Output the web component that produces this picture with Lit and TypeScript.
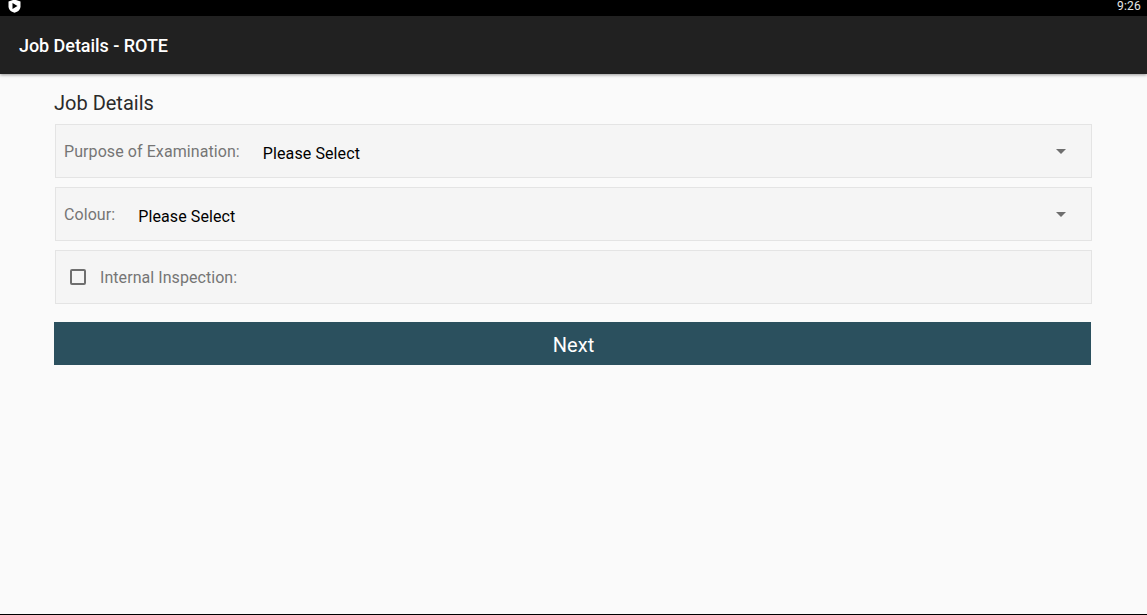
import { LitElement, html, css } from "lit";
import { customElement } from "lit/decorators.js";

@customElement("app-root")
export class AppRoot extends LitElement {
  static styles = css`
    :host { display: flex; flex-direction: column; width: 1147px; height: 615px; overflow: hidden; background: #fafafa; font-family: Roboto, sans-serif; }
    .status { height: 16px; flex: none; background: #000; display: flex; align-items: center; justify-content: space-between; padding: 0 6px 0 8px; color: #e6e6e6; font-size: 12px; }
    .status svg { display: block; margin-top: -4px; }
    .status span { margin-top: -4px; letter-spacing: .2px; }
    .appbar { height: 58px; flex: none; background: #212121; color: #fff; display: flex; align-items: center; padding-left: 19px; font-size: 18px; font-weight: 500; letter-spacing: -.05px; box-shadow: 0 1px 3px rgba(0,0,0,.4); position: relative; }
    main { flex: 1; display: flex; flex-direction: column; padding: 17px 55px 0 55px; border-bottom: 1px solid #000; }
    h1 { margin: 0 0 9px -1px; font-size: 20px; line-height: 24px; font-weight: 400; color: #2b2b2b; height: 24px; }
    .row { box-sizing: border-box; height: 54px; margin-bottom: 9px; background: #f5f5f5; border: 1px solid #e4e4e4; display: flex; align-items: center; padding-left: 8px; padding-right: 25px; }
    .label { font-size: 16px; color: #757575; margin-top: 3px; letter-spacing: .08px; position: relative; top: -1px; }
    .value { font-size: 16px; color: #000; flex: 1; margin-top: 3px; letter-spacing: .1px; position: relative; top: 1px; }
    .l1 { margin-right: 23px; }
    .l2 { margin-right: 23px; }
    .arrow { width: 0; height: 0; border-left: 5px solid transparent; border-right: 5px solid transparent; border-top: 5px solid #6e6e6e; margin-top: 0; }
    .box { box-sizing: border-box; width: 16px; height: 16px; border: 2px solid #6f6f6f; border-radius: 2px; margin: 0 14px 0 6px; flex: none; }
    .check .label { margin-top: 0; top: 0; letter-spacing: .06px; }
    button { display: block; width: 1037px; height: 43px; margin: 9px 0 0 -1px; padding: 0 0 0 2px; border: 0; background: #2b505e; color: #fff; font: 400 20px Roboto, sans-serif; letter-spacing: .1px; line-height: 47px; }
  `;

  render() {
    return html`
      <div class="status">
        <svg width="13" height="14" viewBox="0 0 13 14"><path fill="#fff" d="M6.500 0.500 12.500 2.500V7.500C12.500 10.500 10 12.800 6.500 13.800 3 12.800 0.500 10.500 0.500 7.500V2.500Z"/><path fill="#000" d="M4.500 4 9.500 7 4.500 10Z"/></svg>
        <span>9:26</span>
      </div>
      <header class="appbar">Job Details - ROTE</header>
      <main>
        <h1>Job Details</h1>
        <div class="row">
          <span class="label l1">Purpose of Examination:</span>
          <span class="value">Please Select</span>
          <span class="arrow"></span>
        </div>
        <div class="row">
          <span class="label l2">Colour:</span>
          <span class="value">Please Select</span>
          <span class="arrow"></span>
        </div>
        <div class="row check">
          <span class="box"></span>
          <span class="label">Internal Inspection:</span>
        </div>
        <button>Next</button>
      </main>
    `;
  }
}
